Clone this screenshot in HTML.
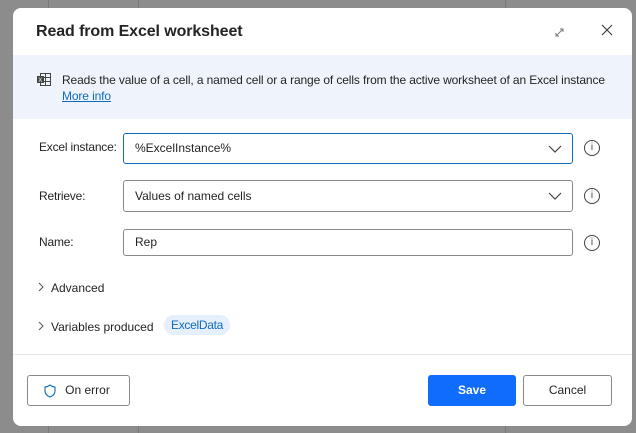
<!DOCTYPE html>
<html><head><style>
body{margin:0;width:636px;height:433px;background:#8c8c8c;font-family:"Liberation Sans",sans-serif;position:relative;overflow:hidden}
.bg1{position:absolute;left:48px;top:0;width:1px;height:433px;background:#7a7a7a}
.bg2{position:absolute;left:138px;top:0;width:1px;height:433px;background:#7a7a7a}
.bg3{position:absolute;left:505px;top:0;width:1px;height:433px;background:#7a7a7a}
.dlg{position:absolute;left:13px;top:8px;width:619px;height:418px;background:#fff;border-radius:8px;overflow:hidden}
.title{position:absolute;left:23px;top:15px;font-size:16px;font-weight:bold;color:#242424;letter-spacing:-0.1px}
.info{position:absolute;left:0;top:47px;width:619px;height:64px;background:#eff4fc}
.info .t{position:absolute;left:49px;top:17px;font-size:12px;color:#242424;line-height:16px;letter-spacing:-0.12px}
.info a{color:#0f6cbd;text-decoration:underline}
.lbl{position:absolute;left:26px;font-size:12px;color:#242424;letter-spacing:-0.2px}
.inp{position:absolute;left:110px;width:450px;border:1px solid #8a8a8a;border-radius:3px;font-size:12px;color:#242424;box-sizing:border-box;padding-left:11px}
.chev{position:absolute;right:10px;top:11px}
.ic{position:absolute;left:571px;width:14px;height:14px;border:1px solid #424242;border-radius:50%;font-size:10px;text-align:center;line-height:14px;color:#424242}
.sec{position:absolute;left:38px;font-size:12px;color:#242424}
.arr{position:absolute;left:25px}
.pill{position:absolute;left:151px;top:307px;background:#e6effc;color:#0f6cbd;font-size:12px;border-radius:10px;padding:3px 7px;letter-spacing:-0.3px}
.sep{position:absolute;left:0;top:346px;width:619px;height:1px;background:#e8e8e8}
.btn{position:absolute;top:367px;height:31px;border:1px solid #8a8a8a;border-radius:3px;box-sizing:border-box;font-size:12px;text-align:center;line-height:29px;color:#242424}
</style></head><body>
<div class="bg1"></div><div class="bg2"></div><div class="bg3"></div>
<div class="dlg">
<div class="title">Read from Excel worksheet</div>
<svg style="position:absolute;left:541px;top:19px" width="11" height="11" viewBox="0 0 11 11"><path d="M2 9L9 2M6 2h3v3M2 6v3h3" stroke="#777" fill="none" stroke-width="1"/></svg>
<svg style="position:absolute;left:588px;top:16px" width="12" height="12" viewBox="0 0 12 12"><path d="M1 1L11 11M11 1L1 11" stroke="#424242" stroke-width="1.2"/></svg>
<div class="info">
<svg style="position:absolute;left:24px;top:18px" width="14" height="13" viewBox="0 0 14 13"><rect x="3.5" y="0.5" width="10" height="12" fill="none" stroke="#444"/><path d="M3.5 4.5h10M3.5 8.5h10M8.5 0.5v12" stroke="#444"/><rect x="0" y="3" width="7" height="7" fill="#444"/><text x="1.2" y="9" font-size="6" fill="#fff" font-family="Liberation Sans">X</text></svg>
<div class="t">Reads the value of a cell, a named cell or a range of cells from the active worksheet of an Excel instance<br><a>More info</a></div>
</div>
<div class="lbl" style="top:132px">Excel instance:</div>
<div class="inp" style="top:125px;height:31px;line-height:29px;border-color:#0f6cbd">%ExcelInstance%<svg class="chev" width="14" height="8" viewBox="0 0 14 8"><path d="M1 1l6 6 6-6" stroke="#424242" fill="none" stroke-width="1.2"/></svg></div>
<div class="ic" style="top:132px">i</div>
<div class="lbl" style="top:181px">Retrieve:</div>
<div class="inp" style="top:172px;height:32px;line-height:30px">Values of named cells<svg class="chev" width="14" height="8" viewBox="0 0 14 8"><path d="M1 1l6 6 6-6" stroke="#424242" fill="none" stroke-width="1.2"/></svg></div>
<div class="ic" style="top:180px">i</div>
<div class="lbl" style="top:227px">Name:</div>
<div class="inp" style="top:221px;height:27px;line-height:25px">Rep</div>
<div class="ic" style="top:227px">i</div>
<svg class="arr" style="top:274px" width="6" height="10" viewBox="0 0 6 10"><path d="M1 1l4 4-4 4" stroke="#555" fill="none"/></svg>
<div class="sec" style="top:273px">Advanced</div>
<svg class="arr" style="top:313px" width="6" height="10" viewBox="0 0 6 10"><path d="M1 1l4 4-4 4" stroke="#555" fill="none"/></svg>
<div class="sec" style="top:312px">Variables produced</div>
<div class="pill">ExcelData</div>
<div class="sep"></div>
<div class="btn" style="left:14px;width:103px"><svg style="position:absolute;left:16px;top:8px" width="12" height="14" viewBox="0 0 12 14"><path d="M6 1C4 2.5 2.5 3 1 3v4c0 3 2.5 5 5 6 2.5-1 5-3 5-6V3C9.5 3 8 2.5 6 1z" fill="none" stroke="#0f6cbd" stroke-width="1.1"/></svg><span style="margin-left:18px">On error</span></div>
<div class="btn" style="left:415px;width:88px;background:#0f6cfd;border-color:#0f6cfd;color:#fff;font-weight:bold">Save</div>
<div class="btn" style="left:510px;width:89px">Cancel</div>
</div>
</body></html>
